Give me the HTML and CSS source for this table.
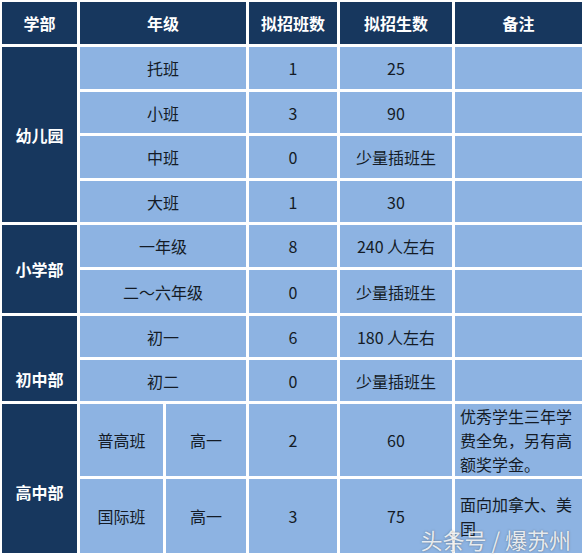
FILE: index.html
```html
<!DOCTYPE html>
<html lang="zh-CN">
<head>
<meta charset="utf-8">
<title>招生计划</title>
<link rel="stylesheet" href="styles.css">
</head>
<body>
<div class="page">
  <div class="plan">
    <div class="head c-sec">学部</div>
    <div class="head c-grade">年级</div>
    <div class="head c-cls">拟招班数</div>
    <div class="head c-stu">拟招生数</div>
    <div class="head c-note">备注</div>

    <div class="sec c-sec span4">幼儿园</div>
    <div class="cell c-grade">托班</div><div class="cell c-cls">1</div><div class="cell c-stu">25</div><div class="cell c-note"></div>
    <div class="cell c-grade">小班</div><div class="cell c-cls">3</div><div class="cell c-stu">90</div><div class="cell c-note"></div>
    <div class="cell c-grade">中班</div><div class="cell c-cls">0</div><div class="cell c-stu">少量插班生</div><div class="cell c-note"></div>
    <div class="cell c-grade">大班</div><div class="cell c-cls">1</div><div class="cell c-stu">30</div><div class="cell c-note"></div>

    <div class="sec c-sec span2">小学部</div>
    <div class="cell c-grade">一年级</div><div class="cell c-cls">8</div><div class="cell c-stu">240 人左右</div><div class="cell c-note"></div>
    <div class="cell c-grade">二～六年级</div><div class="cell c-cls">0</div><div class="cell c-stu">少量插班生</div><div class="cell c-note"></div>

    <div class="sec c-sec span2 sec-low">初中部</div>
    <div class="cell c-grade">初一</div><div class="cell c-cls">6</div><div class="cell c-stu">180 人左右</div><div class="cell c-note"></div>
    <div class="cell c-grade">初二</div><div class="cell c-cls">0</div><div class="cell c-stu">少量插班生</div><div class="cell c-note"></div>

    <div class="sec c-sec span2 sec-mid">高中部</div>
    <div class="cell c-track">普高班</div><div class="cell c-year">高一</div><div class="cell c-cls">2</div><div class="cell c-stu">60</div><div class="cell c-note note">优秀学生三年学费全免，另有高额奖学金。</div>
    <div class="cell c-track">国际班</div><div class="cell c-year">高一</div><div class="cell c-cls">3</div><div class="cell c-stu">75</div><div class="cell c-note note">面向加拿大、美国</div>
  </div>
  <div class="watermark">头条号 / 爆苏州</div>
</div>
</body>
</html>
```
FILE: styles.css
```css
html, body {
  margin: 0;
  padding: 0;
  background: #ffffff;
}
body {
  font-family: "Noto Sans CJK SC", "Noto Sans", sans-serif;
}
.page {
  position: relative;
  width: 585px;
  height: 557px;
  padding: 2px 0 0 2px;
  box-sizing: border-box;
  overflow: hidden;
}
.plan {
  display: grid;
  grid-template-columns: 75px 83px 80px 88px 112px 127px;
  grid-template-rows: 42px 42px 41px 42px 41px 42px 43px 41px 41px 72px 74px;
  gap: 3px;
}
.plan > div {
  display: flex;
  align-items: center;
  justify-content: center;
  font-size: 16px;
  line-height: 24px;
}
.head {
  background: #17375e;
  color: #ffffff;
  font-weight: bold;
}
.sec {
  background: #17375e;
  color: #ffffff;
  font-weight: bold;
}
.sec-low {
  padding-top: 40px;
}
.sec-mid {
  padding-top: 27px;
}
.cell {
  background: #8db3e2;
  color: #141b26;
}
.c-sec { grid-column: 1; }
.c-grade { grid-column: 2 / 4; }
.c-track { grid-column: 2; }
.c-year { grid-column: 3; }
.c-cls { grid-column: 4; }
.c-stu { grid-column: 5; }
.c-note { grid-column: 6; }
.span4 { grid-row: span 4; }
.span2 { grid-row: span 2; }
.plan > .note {
  justify-content: flex-start;
  padding: 0 6px 0 5px;
  text-align: left;
}
.watermark {
  position: absolute;
  right: 14px;
  bottom: 6px;
  font-size: 22px;
  line-height: 24px;
  color: rgba(255, 255, 255, 0.85);
  text-shadow: 0 0 2px rgba(60, 60, 60, 0.6);
  letter-spacing: 0;
}
```
